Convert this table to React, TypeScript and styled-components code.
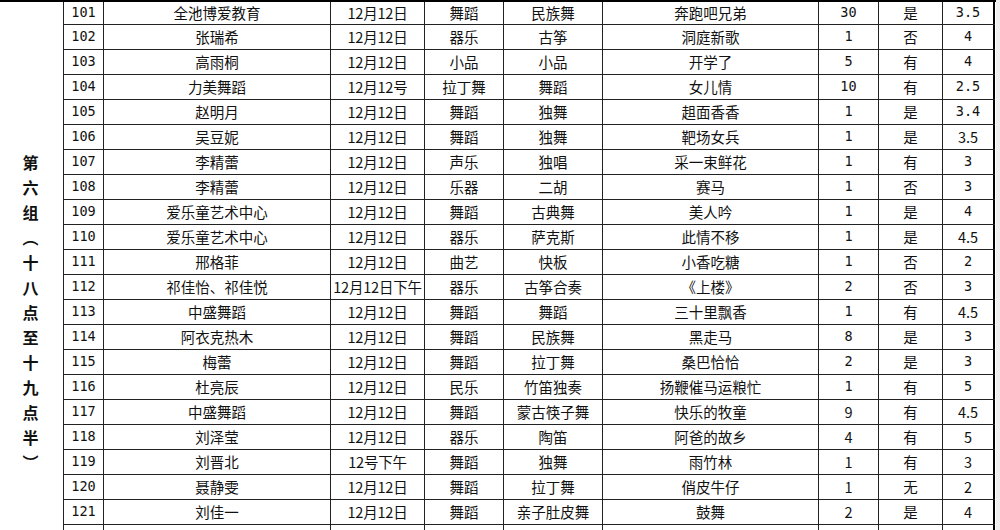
import React from "react";
import styled, { createGlobalStyle } from "styled-components";

const GlobalStyle = createGlobalStyle`
  html, body {
    margin: 0;
    padding: 0;
    background: #efefef;
    overflow: hidden;
  }
  body {
    font-family: "Noto Sans CJK SC", "DejaVu Sans", sans-serif;
    color: #111;
  }
`;

const COLS = "40px 227px 94px 79px 99px 216px 60px 64px 52px";

type Font = "mono" | "sans";

type Row = {
  no: string;
  name: string;
  date: string;
  kind: string;
  form: string;
  title: string;
  count: string;
  flag: string;
  score: string;
  countFont?: Font;
  scoreFont?: Font;
};

const rows: Row[] = [
  { no: "101", name: "全池博爱教育", date: "12月12日", kind: "舞蹈", form: "民族舞", title: "奔跑吧兄弟", count: "30", flag: "是", score: "3.5" },
  { no: "102", name: "张瑞希", date: "12月12日", kind: "器乐", form: "古筝", title: "洞庭新歌", count: "1", flag: "否", score: "4" },
  { no: "103", name: "高雨桐", date: "12月12日", kind: "小品", form: "小品", title: "开学了", count: "5", flag: "有", score: "4" },
  { no: "104", name: "力美舞蹈", date: "12月12号", kind: "拉丁舞", form: "舞蹈", title: "女儿情", count: "10", flag: "有", score: "2.5" },
  { no: "105", name: "赵明月", date: "12月12日", kind: "舞蹈", form: "独舞", title: "趄面香香", count: "1", flag: "是", score: "3.4" },
  { no: "106", name: "吴豆妮", date: "12月12日", kind: "舞蹈", form: "独舞", title: "靶场女兵", count: "1", flag: "是", score: "3.5", scoreFont: "sans" },
  { no: "107", name: "李精蕾", date: "12月12日", kind: "声乐", form: "独唱", title: "采一束鲜花", count: "1", flag: "有", score: "3" },
  { no: "108", name: "李精蕾", date: "12月12日", kind: "乐器", form: "二胡", title: "赛马", count: "1", flag: "否", score: "3" },
  { no: "109", name: "爱乐童艺术中心", date: "12月12日", kind: "舞蹈", form: "古典舞", title: "美人吟", count: "1", flag: "是", score: "4" },
  { no: "110", name: "爱乐童艺术中心", date: "12月12日", kind: "器乐", form: "萨克斯", title: "此情不移", count: "1", flag: "是", score: "4.5", scoreFont: "sans" },
  { no: "111", name: "邢格菲", date: "12月12日", kind: "曲艺", form: "快板", title: "小香吃糖", count: "1", flag: "否", score: "2" },
  { no: "112", name: "祁佳怡、祁佳悦", date: "12月12日下午", kind: "器乐", form: "古筝合奏", title: "《上楼》", count: "2", flag: "否", score: "3" },
  { no: "113", name: "中盛舞蹈", date: "12月12日", kind: "舞蹈", form: "舞蹈", title: "三十里飘香", count: "1", flag: "有", score: "4.5", scoreFont: "sans" },
  { no: "114", name: "阿衣克热木", date: "12月12日", kind: "舞蹈", form: "民族舞", title: "黑走马", count: "8", flag: "是", score: "3" },
  { no: "115", name: "梅蕾", date: "12月12日", kind: "舞蹈", form: "拉丁舞", title: "桑巴恰恰", count: "2", flag: "是", score: "3" },
  { no: "116", name: "杜亮辰", date: "12月12日", kind: "民乐", form: "竹笛独奏", title: "扬鞭催马运粮忙", count: "1", flag: "有", score: "5" },
  { no: "117", name: "中盛舞蹈", date: "12月12日", kind: "舞蹈", form: "蒙古筷子舞", title: "快乐的牧童", count: "9", flag: "有", score: "4.5", countFont: "sans", scoreFont: "sans" },
  { no: "118", name: "刘泽莹", date: "12月12日", kind: "器乐", form: "陶笛", title: "阿爸的故乡", count: "4", flag: "有", score: "5", countFont: "sans", scoreFont: "sans" },
  { no: "119", name: "刘晋北", date: "12号下午", kind: "舞蹈", form: "独舞", title: "雨竹林", count: "1", flag: "有", score: "3", countFont: "sans", scoreFont: "sans" },
  { no: "120", name: "聂静雯", date: "12月12日", kind: "舞蹈", form: "拉丁舞", title: "俏皮牛仔", count: "1", flag: "无", score: "2", countFont: "sans", scoreFont: "sans" },
  { no: "121", name: "刘佳一", date: "12月12日", kind: "舞蹈", form: "亲子肚皮舞", title: "鼓舞", count: "2", flag: "是", score: "4", countFont: "sans", scoreFont: "sans" },
];

const Sheet = styled.div`
  display: flex;
  width: 996px;
  background: #fff;
  border-top: 2px solid #000;
`;

const GroupCell = styled.div`
  width: 64px;
  flex: none;
  box-sizing: border-box;
  border-right: 1px solid #222;
  display: flex;
  justify-content: center;
  padding-top: 153px;
  padding-right: 2px;
`;

const GroupLabel = styled.div`
  writing-mode: vertical-rl;
  text-orientation: upright;
  font-family: "Noto Sans CJK SC", sans-serif;
  font-size: 16px;
  font-weight: 700;
  letter-spacing: 9px;
  line-height: 1;
  color: #111;
`;

const Body = styled.div`
  display: flex;
  flex-direction: column;
`;

const SheetRow = styled.div`
  display: grid;
  grid-template-columns: ${COLS};
  height: 25px;
  box-sizing: border-box;
  border-bottom: 1px solid #222;

  &:first-child {
    height: 23px;
  }
`;

const Cell = styled.div<{ $font?: Font; $last?: boolean }>`
  box-sizing: border-box;
  border-right: ${(p) => (p.$last ? "2px solid #000" : "1px solid #222")};
  display: flex;
  align-items: center;
  justify-content: center;
  white-space: nowrap;
  overflow: hidden;
  font-family: ${(p) =>
    p.$font === "mono"
      ? `"DejaVu Sans Mono", "Noto Sans CJK SC", monospace`
      : `"Noto Sans CJK SC", sans-serif`};
  font-size: ${(p) => (p.$font === "mono" ? "13.5px" : "14.5px")};
  line-height: 1;
  color: #111;
`;

const DateCell = styled(Cell)`
  font-size: 14.5px;
  letter-spacing: -0.2px;
`;

function SheetLine({ row }: { row: Row }) {
  return (
    <SheetRow>
      <Cell $font="mono">{row.no}</Cell>
      <Cell>{row.name}</Cell>
      <DateCell>{row.date}</DateCell>
      <Cell>{row.kind}</Cell>
      <Cell>{row.form}</Cell>
      <Cell>{row.title}</Cell>
      <Cell $font={row.countFont ?? "mono"}>{row.count}</Cell>
      <Cell>{row.flag}</Cell>
      <Cell $font={row.scoreFont ?? "mono"} $last>
        {row.score}
      </Cell>
    </SheetRow>
  );
}

export default function App() {
  return (
    <>
      <GlobalStyle />
      <Sheet>
        <GroupCell>
          <GroupLabel>第六组（十八点至十九点半）</GroupLabel>
        </GroupCell>
        <Body>
          {rows.map((r) => (
            <SheetLine key={r.no} row={r} />
          ))}
          <SheetRow>
            {Array.from({ length: 9 }, (_, i) => (
              <Cell key={i} $last={i === 8} />
            ))}
          </SheetRow>
        </Body>
      </Sheet>
    </>
  );
}
